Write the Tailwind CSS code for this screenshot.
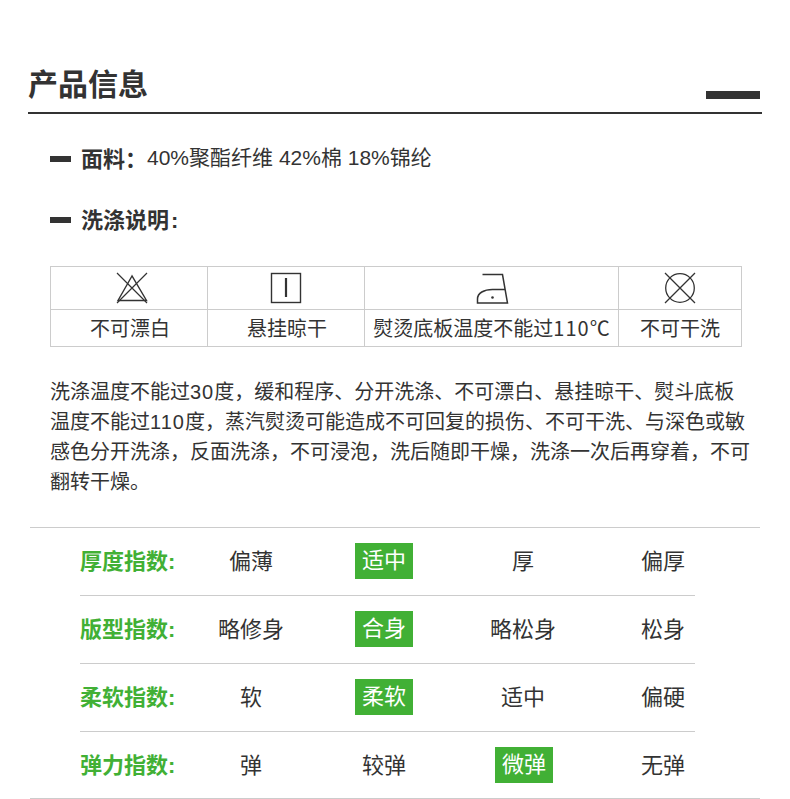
<!DOCTYPE html>
<html><head><meta charset="utf-8"><script src="https://cdn.jsdelivr.net/npm/@tailwindcss/browser@4"></script></head>
<body class="bg-white">
<div class="w-[790px] h-[799px] overflow-hidden font-['Liberation_Sans','Noto_Sans_CJK_SC',sans-serif] text-[#333]">
  <div class="mx-[28px] pt-[65px] h-[114px] border-b-2 border-[#333] flex justify-between">
    <h1 class="text-[30px] leading-[40px] font-bold">产品信息</h1>
    <div class="w-[54px] h-[8px] bg-[#333] mt-[26px] mr-[2px]"></div>
  </div>
  <div class="ml-[50px] mt-[31px] h-[28px] flex items-center text-[21px]"><i class="w-[21px] h-[6px] bg-[#333] mr-[10px]"></i><b class="text-[22px]">面料：</b><span class="pb-[2px]">40%聚酯纤维 42%棉 18%锦纶</span></div>
  <div class="ml-[50px] mt-[33px] h-[28px] flex items-center text-[22px]"><i class="w-[21px] h-[6px] bg-[#333] mr-[10px]"></i><b>洗涤说明<span class="ml-[2px]">:</span></b></div>

  <table class="ml-[50px] mt-[32px] w-[692px] table-fixed border-collapse text-[20px] leading-[28px] text-center font-['Noto_Sans_CJK_SC','Liberation_Sans',sans-serif]">
    <colgroup><col class="w-[157px]"><col class="w-[157px]"><col class="w-[254px]"><col class="w-[123px]"></colgroup>
    <tbody>
      <tr class="h-[43px]">
        <td class="border border-[#ccc] p-0">
          <svg class="block mx-auto" width="42" height="42" viewBox="108 267 42 42" fill="none" stroke="#333" stroke-width="1.2">
            <path d="M132 276 L118 300.5 H146.5 Z" stroke-width="1.4"/>
            <path d="M117 273 L147 303 M147 273 L117 303"/>
          </svg>
        </td>
        <td class="border border-[#ccc] p-0">
          <svg class="block mx-auto" width="42" height="42" viewBox="265 267 42 42" fill="none" stroke="#333">
            <rect x="271.5" y="273.5" width="29" height="29" stroke-width="1.4"/>
            <path d="M286 278 V297" stroke-width="2.2"/>
          </svg>
        </td>
        <td class="border border-[#ccc] p-0">
          <svg class="block mx-auto" width="42" height="42" viewBox="470 267 42 42" fill="none" stroke="#333" stroke-width="1.5">
            <path d="M481.5 274.5 H501.5 L506.5 303 H476.5 V299 C476.5 293 483 289.5 491.5 289.5 H504"/>
            <circle cx="491.5" cy="297.5" r="1.3" fill="#333" stroke="none"/>
          </svg>
        </td>
        <td class="border border-[#ccc] p-0">
          <svg class="block mx-auto" width="42" height="42" viewBox="659 267 42 42" fill="none" stroke="#333" stroke-width="1.3">
            <circle cx="680" cy="288" r="14.3"/>
            <path d="M665 273 L695 303 M695 273 L665 303"/>
          </svg>
        </td>
      </tr>
      <tr class="h-[37px]">
        <td class="border border-[#ccc] p-0 pl-[2px]">不可漂白</td>
        <td class="border border-[#ccc] p-0 pl-[2px]">悬挂晾干</td>
        <td class="border border-[#ccc] p-0">熨烫底板温度不能过<span class="tracking-[1px]">110</span>℃</td>
        <td class="border border-[#ccc] p-0">不可干洗</td>
      </tr>
    </tbody>
  </table>

  <p class="ml-[50px] mt-[30px] w-[700px] text-[20px] leading-[30px]">洗涤温度不能过<span class="tracking-[1px]">30</span>度，缓和程序、分开洗涤、不可漂白、悬挂晾干、熨斗底板温度不能过<span class="tracking-[1px]">110</span>度，蒸汽熨烫可能造成不可回复的损伤、不可干洗、与深色或敏感色分开洗涤，反面洗涤，不可浸泡，洗后随即干燥，洗涤一次后再穿着，不可翻转干燥。</p>

  <div class="mx-[30px] mt-[30px] border-t border-[#ccc] pl-[50px] text-[22px] whitespace-nowrap">
    <div class="w-[615px] h-[68px] pb-[1px] border-b border-[#ccc] grid grid-cols-[94px_154px_112px_166px_114px] items-center text-center">
      <b class="text-left text-[#41b035]">厚度指数:</b><span>偏薄</span>
      <span class="justify-self-center w-[58px] h-[36px] leading-[36px] bg-[#41b035] text-white">适中</span>
      <span>厚</span><span>偏厚</span>
    </div>
    <div class="w-[615px] h-[68px] pb-[1px] border-b border-[#ccc] grid grid-cols-[94px_154px_112px_166px_114px] items-center text-center">
      <b class="text-left text-[#41b035]">版型指数:</b><span>略修身</span>
      <span class="justify-self-center w-[58px] h-[36px] leading-[36px] bg-[#41b035] text-white">合身</span>
      <span>略松身</span><span>松身</span>
    </div>
    <div class="w-[615px] h-[68px] pb-[1px] border-b border-[#ccc] grid grid-cols-[94px_154px_112px_166px_114px] items-center text-center">
      <b class="text-left text-[#41b035]">柔软指数:</b><span>软</span>
      <span class="justify-self-center w-[58px] h-[36px] leading-[36px] bg-[#41b035] text-white">柔软</span>
      <span>适中</span><span>偏硬</span>
    </div>
    <div class="w-[615px] h-[66px] grid grid-cols-[94px_154px_112px_166px_114px] items-center text-center">
      <b class="text-left text-[#41b035]">弹力指数:</b><span>弹</span>
      <span>较弹</span>
      <span class="justify-self-center ml-[2px] w-[58px] h-[36px] leading-[36px] bg-[#41b035] text-white">微弹</span>
      <span>无弹</span>
    </div>
  </div>
  <div class="mx-[30px] border-t border-[#ccc]"></div>
</div>
</body></html>
